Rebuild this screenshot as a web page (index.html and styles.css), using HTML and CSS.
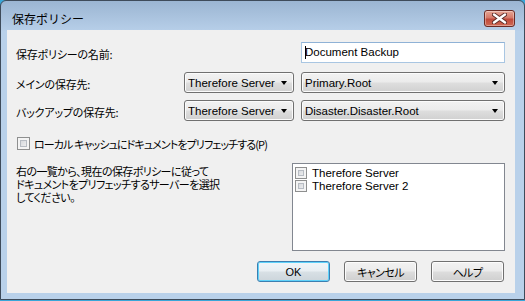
FILE: index.html
```html
<!DOCTYPE html>
<html lang="ja">
<head>
<meta charset="utf-8">
<link rel="stylesheet" href="styles.css">
</head>
<body>
<div class="window">
  <div class="titlebar">
    <span class="title">保存ポリシー</span>
    <div class="close">
      <svg width="15" height="11" viewBox="0 0 15 11">
        <path d="M2 1.5 L13 9.5 M13 1.5 L2 9.5" stroke="#5a2a26" stroke-width="4.2" stroke-linecap="round"/>
        <path d="M2 1.5 L13 9.5 M13 1.5 L2 9.5" stroke="#ffffff" stroke-width="2.4" stroke-linecap="round"/>
      </svg>
    </div>
  </div>
  <div class="client">
    <div class="form">
      <span class="lbl">保存ポリシーの名前:</span>
      <div class="textbox"><span class="caret"></span>Document Backup</div>

      <span class="lbl">メインの保存先:</span>
      <div class="combo"><span>Therefore Server</span><i class="arrow"></i></div>
      <div class="combo"><span>Primary.Root</span><i class="arrow"></i></div>

      <span class="lbl">バックアップの保存先:</span>
      <div class="combo"><span>Therefore Server</span><i class="arrow"></i></div>
      <div class="combo"><span>Disaster.Disaster.Root</span><i class="arrow"></i></div>
    </div>

    <div class="check-row">
      <span class="checkbox"></span>
      <span class="jp check-label">ローカル キャッシュにドキュメントをプリフェッチする(P)</span>
    </div>

    <div class="split">
      <p class="desc">右の一覧から、現在の保存ポリシーに従って<br>ドキュメントをプリフェッチするサーバーを選択<br>してください。</p>
      <div class="listbox">
        <div class="item"><span class="checkbox small"></span><span>Therefore Server</span></div>
        <div class="item"><span class="checkbox small"></span><span>Therefore Server 2</span></div>
      </div>
    </div>

    <div class="buttons">
      <div class="btn default">OK</div>
      <div class="btn jp">キャンセル</div>
      <div class="btn jp">ヘルプ</div>
    </div>
  </div>
</div>
</body>
</html>
```
FILE: styles.css
```css
html, body {
  margin: 0;
  padding: 0;
}
body {
  width: 525px;
  height: 301px;
  overflow: hidden;
  background: #3aa6d8;
  font-family: "Noto Sans CJK JP", sans-serif;
  font-size: 11px;
  color: #000;
}
.window {
  width: 525px;
  height: 300px;
  box-sizing: border-box;
  border: 1px solid #3e4b5a;
  border-radius: 6px 6px 0 0;
  background: linear-gradient(#9bb5d2 0px, #b6cee8 29px, #b9d1ea 30px, #b9d1ea 100%);
  display: flex;
  flex-direction: column;
}
.titlebar {
  height: 29px;
  display: flex;
  align-items: flex-start;
  flex-shrink: 0;
}
.title {
  margin: 11px 0 0 11px;
  line-height: 14px;
  font-size: 12px;
  color: #000;
}
.close {
  margin: 9px 9px 0 auto;
  width: 31px;
  height: 17px;
  box-sizing: border-box;
  border: 1px solid #6b2b25;
  border-radius: 3px;
  background: linear-gradient(#e6a695 0%, #d5796a 45%, #c14a3b 55%, #cf6a55 100%);
  box-shadow: inset 0 0 0 1px rgba(255,255,255,0.35);
  display: flex;
  align-items: center;
  justify-content: center;
}
.client {
  margin: 0 9px 0 6px;
  height: 263px;
  flex-shrink: 0;
  box-sizing: border-box;
  background: #f0f0f0;
  padding: 12px 0 0 9px;
  display: flex;
  flex-direction: column;
}
.form {
  display: grid;
  grid-template-columns: 161px 110px 204px;
  grid-template-rows: 23px 21px 21px;
  column-gap: 7px;
  row-gap: 7px;
  align-items: center;
}
.lbl,
.jp,
.desc {
  font-feature-settings: "palt" 1;
  letter-spacing: -0.6px;
}
.lbl {
  line-height: 14px;
  padding-top: 2px;
  letter-spacing: -0.2px;
}
.form .lbl:first-child {
  align-self: start;
  padding-top: 5px;
}
.check-label {
  letter-spacing: -0.9px;
}
.textbox {
  grid-column: 2 / 4;
  justify-self: end;
  width: 204px;
  align-self: start;
  height: 21px;
  box-sizing: border-box;
  background: #fff;
  border: 1px solid #a9c6e2;
  border-top-color: #8fb2d6;
  font-family: "Liberation Sans", sans-serif;
  font-size: 11.5px;
  line-height: 19px;
  padding-left: 3px;
  display: flex;
  align-items: center;
}
.caret {
  display: inline-block;
  width: 1px;
  height: 13px;
  background: #000;
  margin-right: -1px;
}
.combo {
  height: 21px;
  box-sizing: border-box;
  border: 1px solid #707070;
  border-radius: 3px;
  background: linear-gradient(#f2f2f2 0%, #ebebeb 48%, #dedede 52%, #d0d0d0 100%);
  box-shadow: inset 0 0 0 1px #fbfbfb;
  display: flex;
  align-items: center;
  padding: 0 6px 0 3px;
  font-family: "Liberation Sans", sans-serif;
  font-size: 11.5px;
}
.combo span {
  flex: 1;
  white-space: nowrap;
  overflow: hidden;
}
.arrow {
  width: 0;
  height: 0;
  border-left: 3.5px solid transparent;
  border-right: 3.5px solid transparent;
  border-top: 4px solid #000;
}
.check-row {
  margin-top: 16px;
  display: flex;
  align-items: center;
  height: 13px;
}
.checkbox {
  width: 13px;
  height: 13px;
  box-sizing: border-box;
  border: 1px solid #8e8f8f;
  background: linear-gradient(135deg, #cbcfd5 0%, #e6e7e9 60%, #f6f6f6 100%);
  box-shadow: inset 0 0 0 2px #f4f4f4, inset 0 0 0 3px #b7bcc3;
  margin-right: 4px;
  flex-shrink: 0;
}
.check-row .checkbox {
  margin-left: 1px;
}
.split {
  margin-top: 13px;
  display: flex;
  justify-content: space-between;
  width: 489px;
}
.desc {
  margin: 2px 0 0 0;
  line-height: 13px;
}
.listbox {
  width: 213px;
  height: 88px;
  box-sizing: border-box;
  border: 1px solid #828790;
  background: #fff;
  padding: 2px 0 0 2px;
  font-family: "Liberation Sans", sans-serif;
  font-size: 11.5px;
}
.item {
  height: 13px;
  display: flex;
  align-items: center;
}
.checkbox.small {
  width: 12px;
  height: 12px;
  margin-right: 5px;
}
.buttons {
  margin-top: 10px;
  display: flex;
  justify-content: flex-end;
  gap: 14px;
  width: 488px;
}
.btn {
  width: 73px;
  height: 21px;
  box-sizing: border-box;
  border: 1px solid #707070;
  border-radius: 3px;
  background: linear-gradient(#f2f2f2 0%, #ebebeb 48%, #dddddd 52%, #cfcfcf 100%);
  box-shadow: inset 0 0 0 1px #fcfcfc;
  display: flex;
  align-items: center;
  justify-content: center;
}
.btn.default {
  border-color: #3c7fb1;
  box-shadow: inset 0 0 0 1px #5fd2fa;
  background: linear-gradient(#f1f6f9 0%, #e8eef2 48%, #d8e0e5 52%, #ccd5db 100%);
  font-family: "Liberation Sans", sans-serif;
  font-size: 11px;
}
```
